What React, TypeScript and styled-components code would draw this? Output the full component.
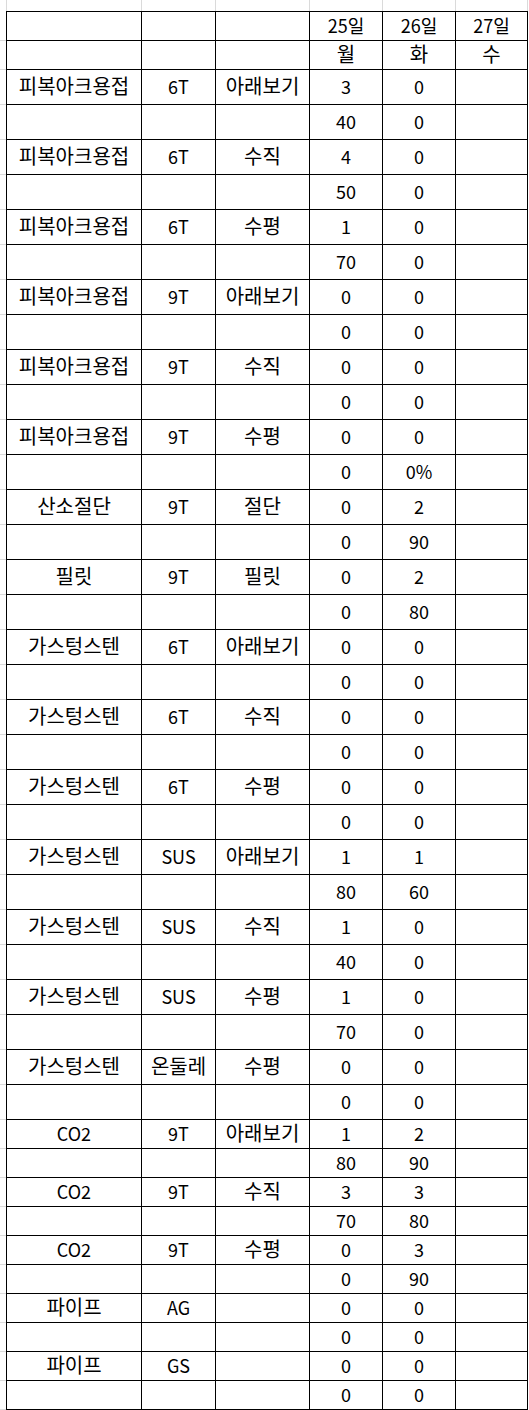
import React from 'react'
import styled, { createGlobalStyle } from 'styled-components'

const GlobalStyle = createGlobalStyle`
  html, body {
    margin: 0;
    padding: 0;
    background: #fff;
  }
  body {
    font-family: "Noto Sans CJK KR", "Noto Sans", sans-serif;
  }
`

const GRID = '#dadada'
const LINE = '#000'

const Sheet = styled.table`
  border-collapse: separate;
  border-spacing: 0;
  table-layout: fixed;
  width: 528px;
  font-family: "Noto Sans CJK KR", "Noto Sans", sans-serif;
  font-size: 18px;
  color: #000;
`

const Row = styled.tr<{ $h: number }>`
  height: ${p => p.$h}px;
`

// light excel gridlines around the bordered block
const TopGutter = styled.td<{ $first?: boolean }>`
  padding: 0;
  border-right: 1px solid ${GRID};
  border-left: ${p => (p.$first ? `1px solid ${GRID}` : 'none')};
`

const SideGutter = styled.td`
  padding: 0;
  border-bottom: 1px solid ${GRID};
`

// $kr: hangul-only text, drawn a bit larger like Malgun Gothic
const Cell = styled.td<{ $first?: boolean; $top?: boolean; $kr?: boolean }>`
  padding: 0 0 2px;
  box-sizing: border-box;
  text-align: center;
  vertical-align: middle;
  white-space: nowrap;
  line-height: 1;
  font-size: ${p => (p.$kr ? '20px' : '18px')};
  border-right: 1px solid ${LINE};
  border-bottom: 1px solid ${LINE};
  border-left: ${p => (p.$first ? `1px solid ${LINE}` : 'none')};
  border-top: ${p => (p.$top ? `1px solid ${LINE}` : 'none')};
`

type Entry = {
  name: string
  spec: string
  pos: string
  day25: [string, string]
  day26: [string, string]
}

const entries: Entry[] = [
  { name: '피복아크용접', spec: '6T', pos: '아래보기', day25: ['3', '40'], day26: ['0', '0'] },
  { name: '피복아크용접', spec: '6T', pos: '수직', day25: ['4', '50'], day26: ['0', '0'] },
  { name: '피복아크용접', spec: '6T', pos: '수평', day25: ['1', '70'], day26: ['0', '0'] },
  { name: '피복아크용접', spec: '9T', pos: '아래보기', day25: ['0', '0'], day26: ['0', '0'] },
  { name: '피복아크용접', spec: '9T', pos: '수직', day25: ['0', '0'], day26: ['0', '0'] },
  { name: '피복아크용접', spec: '9T', pos: '수평', day25: ['0', '0'], day26: ['0', '0%'] },
  { name: '산소절단', spec: '9T', pos: '절단', day25: ['0', '0'], day26: ['2', '90'] },
  { name: '필릿', spec: '9T', pos: '필릿', day25: ['0', '0'], day26: ['2', '80'] },
  { name: '가스텅스텐', spec: '6T', pos: '아래보기', day25: ['0', '0'], day26: ['0', '0'] },
  { name: '가스텅스텐', spec: '6T', pos: '수직', day25: ['0', '0'], day26: ['0', '0'] },
  { name: '가스텅스텐', spec: '6T', pos: '수평', day25: ['0', '0'], day26: ['0', '0'] },
  { name: '가스텅스텐', spec: 'SUS', pos: '아래보기', day25: ['1', '80'], day26: ['1', '60'] },
  { name: '가스텅스텐', spec: 'SUS', pos: '수직', day25: ['1', '40'], day26: ['0', '0'] },
  { name: '가스텅스텐', spec: 'SUS', pos: '수평', day25: ['1', '70'], day26: ['0', '0'] },
  { name: '가스텅스텐', spec: '온둘레', pos: '수평', day25: ['0', '0'], day26: ['0', '0'] },
  { name: 'CO2', spec: '9T', pos: '아래보기', day25: ['1', '80'], day26: ['2', '90'] },
  { name: 'CO2', spec: '9T', pos: '수직', day25: ['3', '70'], day26: ['3', '80'] },
  { name: 'CO2', spec: '9T', pos: '수평', day25: ['0', '0'], day26: ['3', '90'] },
  { name: '파이프', spec: 'AG', pos: '', day25: ['0', '0'], day26: ['0', '0'] },
  { name: '파이프', spec: 'GS', pos: '', day25: ['0', '0'], day26: ['0', '0'] },
]

// the first 15 groups sit on taller rows, the rest on default height
const TALL_GROUPS = 15

const widths = [6, 136, 74, 94, 73, 73, 72]

const isKorean = (s: string) => /^[\uac00-\ud7a3]+$/.test(s)

const App: React.FC = () => {
  return (
    <>
      <GlobalStyle />
      <Sheet>
        <colgroup>
          {widths.map((w, i) => (
            <col key={i} style={{ width: w }} />
          ))}
        </colgroup>
        <tbody>
          <Row $h={11}>
            <td style={{ padding: 0 }} />
            <TopGutter $first />
            <TopGutter />
            <TopGutter />
            <TopGutter />
            <TopGutter />
            <TopGutter />
          </Row>
          <Row $h={30}>
            <SideGutter />
            <Cell $first $top />
            <Cell $top />
            <Cell $top />
            <Cell $top>25일</Cell>
            <Cell $top>26일</Cell>
            <Cell $top>27일</Cell>
          </Row>
          <Row $h={29}>
            <SideGutter />
            <Cell $first />
            <Cell />
            <Cell />
            <Cell $kr>월</Cell>
            <Cell $kr>화</Cell>
            <Cell $kr>수</Cell>
          </Row>
          {entries.map((e, i) => {
            const h = i < TALL_GROUPS ? 35 : 29
            return (
              <React.Fragment key={i}>
                <Row $h={h}>
                  <SideGutter />
                  <Cell $first $kr={isKorean(e.name)}>{e.name}</Cell>
                  <Cell $kr={isKorean(e.spec)}>{e.spec}</Cell>
                  <Cell $kr>{e.pos}</Cell>
                  <Cell>{e.day25[0]}</Cell>
                  <Cell>{e.day26[0]}</Cell>
                  <Cell />
                </Row>
                <Row $h={h}>
                  <SideGutter />
                  <Cell $first />
                  <Cell />
                  <Cell />
                  <Cell>{e.day25[1]}</Cell>
                  <Cell>{e.day26[1]}</Cell>
                  <Cell />
                </Row>
              </React.Fragment>
            )
          })}
        </tbody>
      </Sheet>
    </>
  )
}

export default App
